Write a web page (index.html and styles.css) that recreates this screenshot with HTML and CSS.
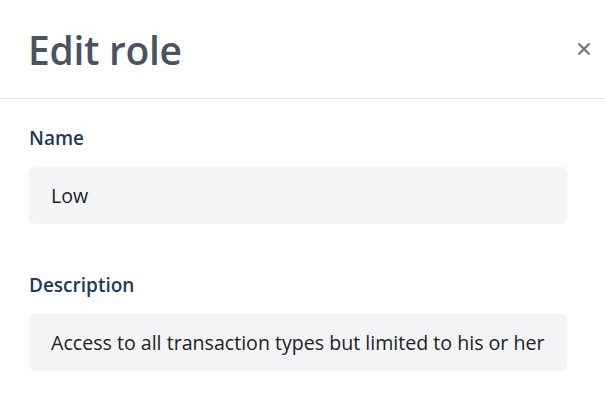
FILE: index.html
```html
<!DOCTYPE html>
<html lang="en">
<head>
<meta charset="utf-8">
<title>Edit role</title>
<link rel="stylesheet" href="styles.css">
</head>
<body>
<div class="modal">
  <div class="modal-header">
    <h1 class="modal-title">Edit role</h1>
    <button class="close" aria-label="Close">
      <svg width="14" height="14" viewBox="0 0 14 14"><path d="M1.5 1.5 L12.5 12.5 M12.5 1.5 L1.5 12.5" stroke="#7b7b7b" stroke-width="2.4" stroke-linecap="butt"/></svg>
    </button>
  </div>
  <div class="modal-body">
    <div class="field">
      <label class="label" for="name">Name</label>
      <div class="input" id="name">Low</div>
    </div>
    <div class="field">
      <label class="label" for="desc">Description</label>
      <div class="input" id="desc">Access to all transaction types but limited to his or her</div>
    </div>
  </div>
</div>
</body>
</html>
```
FILE: styles.css
```css
* { box-sizing: border-box; }
html, body { margin: 0; background: #fff; }
body { font-family: "Open Sans", "Noto Sans", sans-serif; }
.modal { width: 605px; }
.modal-header {
  display: flex;
  align-items: center;
  justify-content: space-between;
  height: 99px;
  padding: 0 14px 0 28px;
  border-bottom: 1px solid #e4e4ea;
}
.modal-title {
  margin: 0;
  font-size: 39px;
  font-weight: 600;
  color: #4a5361;
  line-height: 1;
  letter-spacing: -0.3px;
}
.close {
  background: none;
  border: 0;
  padding: 0;
  width: 14px;
  height: 14px;
  display: flex;
}
.modal-body { padding: 26px 38px 0 29px; }
.field { display: flex; flex-direction: column; margin-bottom: 48px; }
.label {
  font-size: 19px;
  font-weight: 600;
  color: #1e3a5e;
  line-height: 26px;
  margin-bottom: 16px;
}
.input {
  height: 57px;
  background: #f3f4f6;
  border-radius: 6px;
  padding: 0 22px;
  display: flex;
  align-items: center;
  font-size: 19.6px;
  color: #222;
  white-space: nowrap;
  overflow: hidden;
}
```
